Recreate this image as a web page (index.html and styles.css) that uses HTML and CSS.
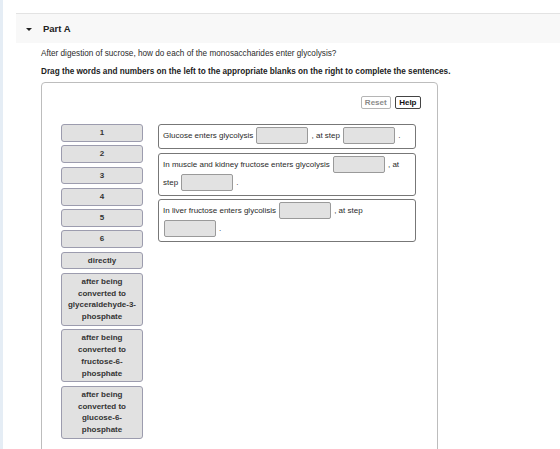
FILE: index.html
```html
<!DOCTYPE html>
<html>
<head>
<meta charset="utf-8">
<link rel="stylesheet" href="styles.css">
</head>
<body>
<div class="page">
  <div class="strip"></div>
  <div class="content">
    <div class="part-header">
      <span class="caret"></span>
      <span class="part-title">Part A</span>
    </div>
    <p class="question">After digestion of sucrose, how do each of the monosaccharides enter glycolysis?</p>
    <p class="instruction">Drag the words and numbers on the left to the appropriate blanks on the right to complete the sentences.</p>
    <div class="panel">
      <div class="toolbar">
        <span class="btn btn-reset">Reset</span>
        <span class="btn btn-help">Help</span>
      </div>
      <div class="work">
        <div class="tiles">
          <div class="tile">1</div>
          <div class="tile">2</div>
          <div class="tile">3</div>
          <div class="tile">4</div>
          <div class="tile">5</div>
          <div class="tile">6</div>
          <div class="tile">directly</div>
          <div class="tile">after being converted to glyceraldehyde-3-phosphate</div>
          <div class="tile">after being converted to fructose-6-phosphate</div>
          <div class="tile">after being converted to glucose-6-phosphate</div>
        </div>
        <div class="sentences">
          <div class="sentence">Glucose enters glycolysis <span class="blank"></span>, at step <span class="blank"></span>.</div>
          <div class="sentence">In muscle and kidney fructose enters glycolysis <span class="blank"></span>, at step <span class="blank"></span>.</div>
          <div class="sentence">In liver fructose enters glycolisis <span class="blank"></span>, at step <span class="blank"></span>.</div>
        </div>
      </div>
    </div>
  </div>
</div>
</body>
</html>
```
FILE: styles.css
```css
html, body {
  margin: 0;
  padding: 0;
  background: #fff;
}
body {
  font-family: "Liberation Sans", Arial, sans-serif;
  color: #333;
  width: 560px;
  height: 449px;
  overflow: hidden;
}
.page {
  display: flex;
  height: 449px;
}
.strip {
  width: 3px;
  flex: none;
  background: #e5edf5;
}
.content {
  flex: 1;
  margin-left: 13px;
}
.part-header {
  margin-top: 13px;
  height: 29px;
  border-top: 1px solid #e3e3e3;
  background: #f8f8f8;
  display: flex;
  align-items: center;
  padding-left: 10px;
}
.caret {
  width: 0;
  height: 0;
  border-left: 3px solid transparent;
  border-right: 3px solid transparent;
  border-top: 3px solid #222;
  margin-top: 1px;
}
.part-title {
  margin-left: 11px;
  font-size: 9.5px;
  font-weight: bold;
  color: #222;
}
.question {
  margin: 5px 0 0 25px;
  font-size: 8.2px;
  line-height: 12px;
  color: #2a2a2a;
}
.instruction {
  margin: 6px 0 0 25px;
  font-size: 8.2px;
  line-height: 12px;
  font-weight: bold;
  color: #222;
}
.panel {
  margin: 4px 0 0 25px;
  width: 397px;
  height: 400px;
  border: 1px solid #bdbdbd;
  border-radius: 4px;
  padding-top: 13px;
  box-sizing: border-box;
}
.toolbar {
  display: flex;
  justify-content: flex-end;
  gap: 4px;
  padding-right: 16px;
}
.btn {
  height: 13px;
  box-sizing: border-box;
  padding: 0 3px;
  font-size: 8px;
  line-height: 11px;
  font-weight: bold;
  border-radius: 2px;
  background: #fff;
}
.btn-reset {
  border: 1px solid #b5b5b5;
  color: #8a8a8a;
}
.btn-help {
  border: 1px solid #444;
  color: #111;
  padding: 0 3.5px;
}
.work {
  display: flex;
  gap: 15px;
  margin-top: 15px;
  padding-left: 19px;
}
.tiles {
  width: 82px;
  display: flex;
  flex-direction: column;
  gap: 3.5px;
}
.tile {
  border: 1px solid #9c9cae;
  border-radius: 3px;
  background: #e1e1e1;
  padding: 2px 3px;
  font-size: 8px;
  line-height: 11.75px;
  font-weight: bold;
  text-align: center;
  color: #333;
}
.sentences {
  width: 258px;
  display: flex;
  flex-direction: column;
  gap: 3.5px;
}
.sentence {
  border: 1px solid #777;
  border-radius: 3px;
  padding: 2px 4px 3px 4px;
  font-size: 8px;
  line-height: 18px;
  color: #2a2a2a;
}
.blank {
  display: inline-block;
  width: 52px;
  height: 17px;
  box-sizing: border-box;
  border: 1px solid #9a9a9a;
  border-radius: 2px;
  background: #e2e2e2;
  vertical-align: middle;
  margin-left: 1px;
  margin-right: 3px;
}
```
